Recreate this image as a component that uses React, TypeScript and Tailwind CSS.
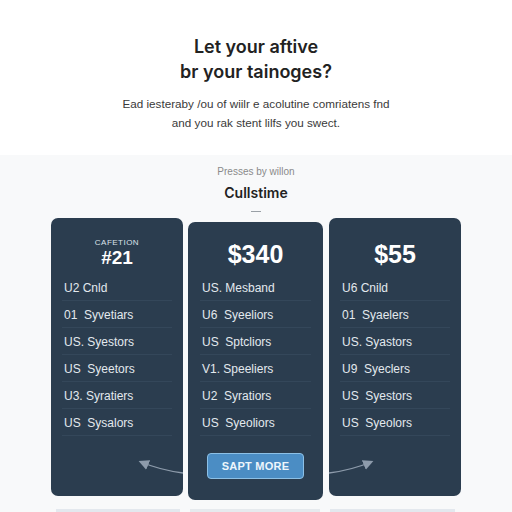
import React from "react";

type Plan = {
  kicker?: string;
  price: string;
  priceClass: string;
  rows: string[];
  featured?: boolean;
};

const PLANS: Plan[] = [
  {
    kicker: "CAFETION",
    price: "#21",
    priceClass: "text-[19px] leading-[20px]",
    rows: ["U2 Cnld", "01  Syvetiars", "US. Syestors", "US  Syeetors", "U3. Syratiers", "US  Sysalors"],
  },
  {
    price: "$340",
    priceClass: "text-[25px] leading-[28px]",
    rows: ["US. Mesband", "U6  Syeeliors", "US  Sptcliors", "V1. Speeliers", "U2  Syratiors", "US  Syeoliors"],
    featured: true,
  },
  {
    price: "$55",
    priceClass: "text-[25px] leading-[28px]",
    rows: ["U6 Cnild", "01  Syaelers", "US. Syastors", "U9  Syeclers", "US  Syestors", "US  Syeolors"],
  },
];

function PlanCard({ plan }: { plan: Plan }) {
  return (
    <div
      className={
        plan.featured
          ? "relative z-10 mt-[4px] flex h-[278px] w-[135px] flex-col rounded-[7px] bg-[#2b3d4f] px-[12px]"
          : "flex h-[278px] w-[132px] flex-col rounded-[7px] bg-[#2b3d4f] px-[11px]"
      }
    >
      <div
        className={
          plan.featured
            ? "flex h-[52px] flex-col items-center justify-end pb-[6px] font-bold text-white"
            : "flex h-[56px] flex-col items-center justify-end pb-[6px] font-bold text-white"
        }
      >
        {plan.kicker && (
          <span className="text-[8px] leading-[10px] font-medium tracking-[0.06em] text-[#dbe3ea]">{plan.kicker}</span>
        )}
        <span className={plan.priceClass}>{plan.price}</span>
      </div>
      {plan.rows.map((row, i) => (
        <div
          key={i}
          className="flex h-[27px] items-end border-b border-[#34475a] pb-[6px] pl-[2px] text-[12px] leading-[12px] whitespace-pre text-[#e3e9ee]"
        >
          {row}
        </div>
      ))}
      {plan.featured && (
        <div className="mt-[17px] flex justify-center">
          <button className="h-[26px] w-[97px] rounded-[4px] border border-[#8cc0e6] bg-[#4b8dc4] text-[11px] font-bold tracking-[0.02em] text-[#eef6fc]">
            SAPT MORE
          </button>
        </div>
      )}
    </div>
  );
}

export default function App() {
  return (
    <div className="flex h-[512px] w-[512px] flex-col overflow-hidden bg-[#f8f9fa] font-['Inter',sans-serif]">
      <section className="flex h-[155px] flex-col items-center bg-white pt-[34px] text-center">
        <h1 className="text-[18px] leading-[25px] font-semibold text-[#222]">
          Let your aftive
          <br />
          br your tainoges?
        </h1>
        <p className="mt-[10px] font-['Liberation_Sans',sans-serif] text-[11.7px] leading-[19px] text-[#3a3a3a]">
          Ead iesteraby /ou of wiilr e acolutine comriatens fnd
          <br />
          and you rak stent lilfs you swect.
        </p>
      </section>

      <section className="flex flex-col items-center pt-[10px]">
        <p className="font-['Liberation_Sans',sans-serif] text-[10px] leading-[14px] text-[#8a8a8a]">Presses by willon</p>
        <h2 className="mt-[5px] text-[14px] leading-[18px] font-semibold text-[#222]">Cullstime</h2>
        <div className="mt-[9px] h-px w-[10px] bg-[#9aa0a6]" />
      </section>

      <div className="relative mt-[6px] flex gap-[5px] px-[51px] font-['Liberation_Sans',sans-serif]">
        <PlanCard plan={PLANS[0]} />
        <PlanCard plan={PLANS[1]} />
        <div className="ml-[1px]">
          <PlanCard plan={PLANS[2]} />
        </div>

        {/* connector arrows pointing out from the featured plan */}
        <svg className="pointer-events-none absolute top-0 left-0" width="512" height="290" viewBox="0 218 512 290">
          <defs>
            <marker id="head" markerWidth="8" markerHeight="8" refX="6" refY="4" orient="auto">
              <path d="M0,0 L8,4 L0,8 Z" fill="#8d9bab" />
            </marker>
          </defs>
          <path d="M183,473 Q160,470 141,462" stroke="#8d9bab" strokeWidth="1.3" fill="none" markerEnd="url(#head)" />
          <path d="M329,473 Q352,470 371,462" stroke="#8d9bab" strokeWidth="1.3" fill="none" markerEnd="url(#head)" />
        </svg>
      </div>

      <div className="mt-[9px] flex gap-[10px] px-[56px]">
        <div className="h-[3px] w-[124px] bg-[#e3e8ee]" />
        <div className="h-[3px] w-[130px] bg-[#e6eaee]" />
        <div className="h-[3px] w-[125px] bg-[#e3e8ee]" />
      </div>
    </div>
  );
}
